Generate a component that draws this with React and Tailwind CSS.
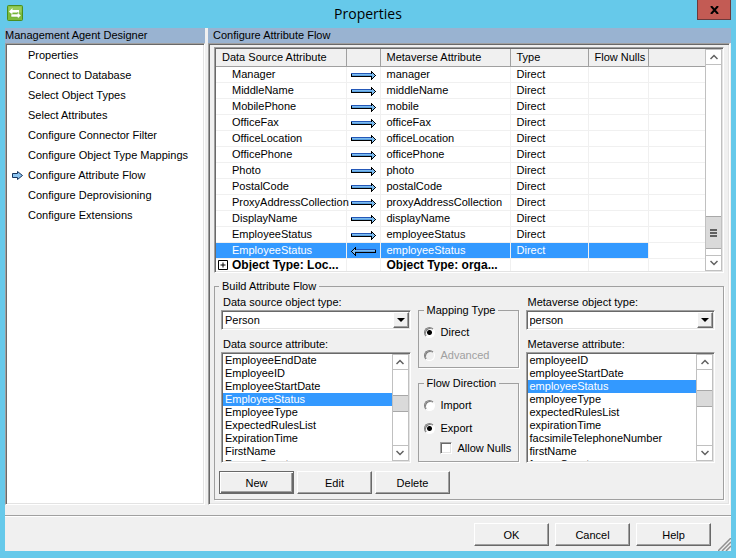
import React, { useState } from 'react';

const NAV_ITEMS = [
  'Properties',
  'Connect to Database',
  'Select Object Types',
  'Select Attributes',
  'Configure Connector Filter',
  'Configure Object Type Mappings',
  'Configure Attribute Flow',
  'Configure Deprovisioning',
  'Configure Extensions',
];

const FLOWS = [
  { source: 'Manager', target: 'manager' },
  { source: 'MiddleName', target: 'middleName' },
  { source: 'MobilePhone', target: 'mobile' },
  { source: 'OfficeFax', target: 'officeFax' },
  { source: 'OfficeLocation', target: 'officeLocation' },
  { source: 'OfficePhone', target: 'officePhone' },
  { source: 'Photo', target: 'photo' },
  { source: 'PostalCode', target: 'postalCode' },
  { source: 'ProxyAddressCollection', target: 'proxyAddressCollection' },
  { source: 'DisplayName', target: 'displayName' },
  { source: 'EmployeeStatus', target: 'employeeStatus' },
  { source: 'EmployeeStatus', target: 'employeeStatus', exported: true },
];

const SOURCE_ATTRIBUTES = [
  'EmployeeEndDate', 'EmployeeID', 'EmployeeStartDate', 'EmployeeStatus', 'EmployeeType',
  'ExpectedRulesList', 'ExpirationTime', 'FirstName', 'FreezeCount',
];

const METAVERSE_ATTRIBUTES = [
  'employeeID', 'employeeStartDate', 'employeeStatus', 'employeeType', 'expectedRulesList',
  'expirationTime', 'facsimileTelephoneNumber', 'firstName', 'freezeCount',
];

// classic 3D edges, the padding keeps children off the inner shadow line
const SUNKEN = 'border border-t-[#a0a0a0] border-l-[#a0a0a0] border-r-white border-b-white shadow-[inset_1px_1px_0_#696969,inset_-1px_-1px_0_#e3e3e3]';
const RAISED = 'border border-t-white border-l-white border-r-[#696969] border-b-[#696969] shadow-[inset_-1px_-1px_0_#a0a0a0]';

const FlowArrow = ({ left = false }) => (
  <svg width="25" height="9" viewBox="0 0 25 9" className={left ? 'block -scale-x-100' : 'block'} shapeRendering="crispEdges">
    <path d="M0 2h20V0h1v1h1v1h1v1h1v1h1v1h-1v1h-1v1h-1v1h-1v1h-1V6H0z" fill="#000" />
    <path d="M1 3h20V2h1v1h1v1h1v1h-1v1h-1v1h-1V5H1z" fill="#7cbcf0" />
    <path d="M0 2h20v1H0z" fill="#2458b8" />
    <path d="M1 4h20v1H1z" fill="#5a9fe0" />
  </svg>
);

const StepArrow = () => (
  <svg width="12" height="11" viewBox="0 0 12 11" className="block">
    <path d="M.5 3.500h5v-2l5 4-5 4v-2h-5z" fill="#8cc4f0" stroke="#16345f" />
  </svg>
);

const ScrollArrow = ({ down = false }) => (
  <button className="flex h-4 w-full shrink-0 items-center justify-center border-y border-[#c0c0c0] bg-white" aria-label={down ? 'Scroll down' : 'Scroll up'}>
    <svg width="8" height="6" viewBox="0 0 8 6" className={down ? 'rotate-180' : ''}>
      <path d="M.5 5 4 1.500 7.500 5" fill="none" stroke="#606060" strokeWidth="1.500" />
    </svg>
  </button>
);

const ScrollBar = ({ before, thumb, after, grip = false }) => (
  <div className="flex w-[17px] shrink-0 flex-col border-x border-[#c0c0c0] bg-white">
    <ScrollArrow />
    <div style={{ flexGrow: before }} />
    <div className="flex shrink-0 flex-col items-center justify-center gap-px border-y border-[#a8a8a8] bg-[#dadada]" style={{ height: thumb }}>
      {grip && [0, 1, 2].map(i => <span key={i} className="h-[2px] w-[7px] bg-[#606060]" />)}
    </div>
    <div style={{ flexGrow: after }} />
    <ScrollArrow down />
  </div>
);

const Group = ({ title, className = '', children }) => (
  <fieldset className={`min-w-0 border border-[#a0a0a0] shadow-[1px_1px_0_#fff] ${className}`}>
    <legend className="px-[3px]">{title}</legend>
    {children}
  </fieldset>
);

const PushButton = ({ isDefault = false, children }) => (
  <button
    className={`h-[23px] w-[75px] bg-[#f0f0f0] text-center ${
      isDefault
        ? 'border border-[#696969] shadow-[inset_1px_1px_0_#fff,inset_-1px_-1px_0_#696969,inset_-2px_-2px_0_#a0a0a0]'
        : RAISED
    }`}
  >
    {children}
  </button>
);

const AttributePicker = ({ id, typeLabel, type, listLabel, items, selected, before, after }) => (
  <div className="flex min-w-0 flex-1 flex-col">
    <label htmlFor={`${id}-type`} className="h-[15px] pl-0.5 leading-[14px]">{typeLabel}</label>
    <div className={`relative flex h-5 bg-white p-px ${SUNKEN}`}>
      <select id={`${id}-type`} className="w-full appearance-none px-0.5" defaultValue={type}>
        <option>{type}</option>
      </select>
      <span className={`pointer-events-none absolute inset-y-px right-px flex w-4 items-center justify-center bg-[#f0f0f0] ${RAISED}`}>
        <span className="border-x-4 border-t-4 border-x-transparent border-t-black" />
      </span>
    </div>
    <span id={`${id}-list`} className="mt-[7px] h-[15px] pl-0.5 leading-[14px]">{listLabel}</span>
    <div className={`flex h-[111px] bg-white p-px ${SUNKEN}`}>
      <ul role="listbox" aria-labelledby={`${id}-list`} className="flex-1 overflow-hidden">
        {items.map(item => (
          <li
            key={item}
            role="option"
            aria-selected={item === selected}
            className={`h-[13px] px-0.5 leading-[13px] ${item === selected ? 'bg-[#3399ff] text-white' : ''}`}
          >
            {item}
          </li>
        ))}
      </ul>
      <ScrollBar before={before} thumb={17} after={after} />
    </div>
  </div>
);

const Radio = ({ name, label, disabled = false, checked, onChange }) => (
  <label className={`flex items-center gap-1.5 leading-[14px] ${disabled ? 'text-[#a0a0a0]' : ''}`}>
    <input
      type="radio"
      name={name}
      disabled={disabled}
      checked={checked}
      onChange={onChange}
      className={`size-[11px] appearance-none rounded-full border border-t-[#808080] border-l-[#808080] border-r-white border-b-white shadow-[inset_1px_1px_0_#808080] ${
        disabled ? 'bg-[#f0f0f0]' : 'bg-white'
      } checked:bg-[radial-gradient(circle,#000_2px,#fff_3px)]`}
    />
    {label}
  </label>
);

const FlowTable = () => (
  <div className={`flex h-[226px] bg-white p-px ${SUNKEN}`}>
    <div className="flex-1 overflow-hidden">
      <table className="w-full table-fixed border-collapse">
        <colgroup>
          <col className="w-[130px]" />
          <col className="w-[34px]" />
          <col className="w-[130px]" />
          <col className="w-[78px]" />
          <col className="w-[60px]" />
          <col />
        </colgroup>
        <thead>
          <tr className="h-[17px] bg-[#f0f0f0] text-left">
            {['Data Source Attribute', '', 'Metaverse Attribute', 'Type', 'Flow Nulls', ''].map((title, i) => (
              <th key={i} className="border-r border-b border-[#a0a0a0] pl-1.5 font-normal whitespace-nowrap last:border-r-0">
                {title}
              </th>
            ))}
          </tr>
        </thead>
        <tbody>
          {FLOWS.map(({ source, target, exported }, i) => {
            const cell = `h-4 border-r border-b border-[#f0f0f0] p-0 leading-[14px] ${exported ? 'bg-[#3399ff] text-white' : ''}`;
            return (
              <tr key={i}>
                <td className={cell}><span className="pl-4">{source}</span></td>
                <td className={cell}><div className="flex pt-0.5 pl-1"><FlowArrow left={exported} /></div></td>
                <td className={cell}><span className="pl-1.5">{target}</span></td>
                <td className={cell}><span className="pl-1.5">Direct</span></td>
                <td className={cell} />
                <td className="border-b border-[#f0f0f0]" />
              </tr>
            );
          })}
          <tr className="text-[12px] leading-[13px] font-bold">
            <td className="border-r border-[#f0f0f0] p-0">
              <div className="flex items-center gap-1 pl-0.5 whitespace-nowrap">
                <svg width="10" height="10" viewBox="0 0 10 10" className="shrink-0">
                  <path d="M.5.5h9v9h-9zM2.500 5h5M5 2.500v5" fill="none" stroke="#000" />
                </svg>
                Object Type: Loc...
              </div>
            </td>
            <td className="border-r border-[#f0f0f0]" />
            <td className="border-r border-[#f0f0f0] p-0 whitespace-nowrap"><div className="pl-1.5">Object Type: orga...</div></td>
            <td className="border-r border-[#f0f0f0]" />
            <td className="border-r border-[#f0f0f0]" />
            <td />
          </tr>
        </tbody>
      </table>
    </div>
    <ScrollBar before={152} thumb={33} after={6} grip />
  </div>
);

const App = () => {
  const [mapping, setMapping] = useState('Direct');
  const [direction, setDirection] = useState('Export');

  return (
    <div className="flex min-h-screen flex-col bg-[#66c9ea] px-[5px] pb-[7px] font-['Liberation_Sans',Arial,sans-serif] text-[11px] leading-[14px] text-black">
      <header className="relative flex h-7 items-center justify-center">
        <svg width="16" height="16" viewBox="0 0 16 16" className="absolute top-[5px] left-0.5">
          <rect x=".5" y=".5" width="15" height="15" rx="1" fill="#7dbb3c" stroke="#4a8f1e" />
          <path d="M1.500 1.500h13v6h-13z" fill="#95cb5c" />
          <path d="M2 6.500 5.500 3v2H12v3.500h-2V7.500H5.500V10z" fill="#fff" />
          <path d="M14 10.500 10.500 7v2H4v3h6.500v2z" fill="#fff" stroke="#5fa02c" strokeWidth=".5" />
        </svg>
        <h1 className="font-['Open_Sans','Noto_Sans',sans-serif] text-[14px]">Properties</h1>
        <button aria-label="Close" className="absolute top-0 right-0 flex h-5 w-[34px] items-center justify-center border border-t-0 border-[#6b3a3c] bg-[#c35b54]">
          <svg width="9" height="8" viewBox="0 0 9 8">
            <path d="M1 0 8 8M8 0 1 8" stroke="#000" strokeWidth="2" />
          </svg>
        </button>
      </header>

      <div className="flex flex-1 flex-col bg-[#f0f0f0]">
        <main className="flex flex-1 gap-[3px]">
          <aside className="flex w-[200px] flex-col">
            <h2 className="h-[15px] bg-[#99b3d1]">Management Agent Designer</h2>
            <nav className={`flex-1 bg-white p-0.5 pt-px ${SUNKEN}`}>
              {NAV_ITEMS.map(item => (
                <a key={item} href="#" className="flex h-5 items-center pl-1">
                  <span className="w-4">{item === 'Configure Attribute Flow' && <StepArrow />}</span>
                  {item}
                </a>
              ))}
            </nav>
          </aside>

          <section className="flex min-w-0 flex-1 flex-col">
            <h2 className="h-[15px] bg-[#99b3d1] pl-[5px]">Configure Attribute Flow</h2>
            <div className={`mr-px flex-1 px-[5px] pt-[3px] ${SUNKEN}`}>
              <FlowTable />
              <Group title="Build Attribute Flow" className="mt-1.5 px-1 pt-0.5 pb-[5px]">
                <div className="flex gap-[7px] pr-1 pl-0.5">
                  <AttributePicker
                    id="source"
                    typeLabel="Data source object type:"
                    type="Person"
                    listLabel="Data source attribute:"
                    items={SOURCE_ATTRIBUTES}
                    selected="EmployeeStatus"
                    before={25}
                    after={33}
                  />
                  <div className="flex w-[101px] flex-col gap-2 pt-2">
                    <Group title="Mapping Type" className="h-[65px] px-[5px]">
                      <div className="flex flex-col gap-[9px] pt-2">
                        <Radio name="mapping" label="Direct" checked={mapping === 'Direct'} onChange={() => setMapping('Direct')} />
                        <Radio name="mapping" label="Advanced" disabled checked={false} onChange={() => setMapping('Advanced')} />
                      </div>
                    </Group>
                    <Group title="Flow Direction" className="h-[86px] px-[5px]">
                      <div className="flex flex-col gap-[9px] pt-2">
                        <Radio name="direction" label="Import" checked={direction === 'Import'} onChange={() => setDirection('Import')} />
                        <Radio name="direction" label="Export" checked={direction === 'Export'} onChange={() => setDirection('Export')} />
                      </div>
                      <label className="mt-1.5 flex items-center gap-1.5 pl-4">
                        <input type="checkbox" className={`size-[12px] appearance-none bg-white ${SUNKEN}`} />
                        Allow Nulls
                      </label>
                    </Group>
                  </div>
                  <AttributePicker
                    id="metaverse"
                    typeLabel="Metaverse object type:"
                    type="person"
                    listLabel="Metaverse attribute:"
                    items={METAVERSE_ATTRIBUTES}
                    selected="employeeStatus"
                    before={20}
                    after={38}
                  />
                </div>
                <div className="mt-2 flex gap-[3px]">
                  <PushButton isDefault>New</PushButton>
                  <PushButton>Edit</PushButton>
                  <PushButton>Delete</PushButton>
                </div>
              </Group>
            </div>
          </section>
        </main>

        <footer className="relative mt-2.5 flex h-[36px] items-center justify-end gap-1.5 border-t border-[#a0a0a0] pt-0.5 pr-5 shadow-[inset_0_1px_0_#fff]">
          <PushButton>OK</PushButton>
          <PushButton>Cancel</PushButton>
          <PushButton>Help</PushButton>
          <svg width="13" height="13" viewBox="0 0 13 13" className="absolute right-0 bottom-0">
            <path d="M0 13 13 0M4 13l9-9M8 13l5-5" stroke="#909090" strokeWidth="1.500" />
          </svg>
        </footer>
      </div>
    </div>
  );
};

export default App;
